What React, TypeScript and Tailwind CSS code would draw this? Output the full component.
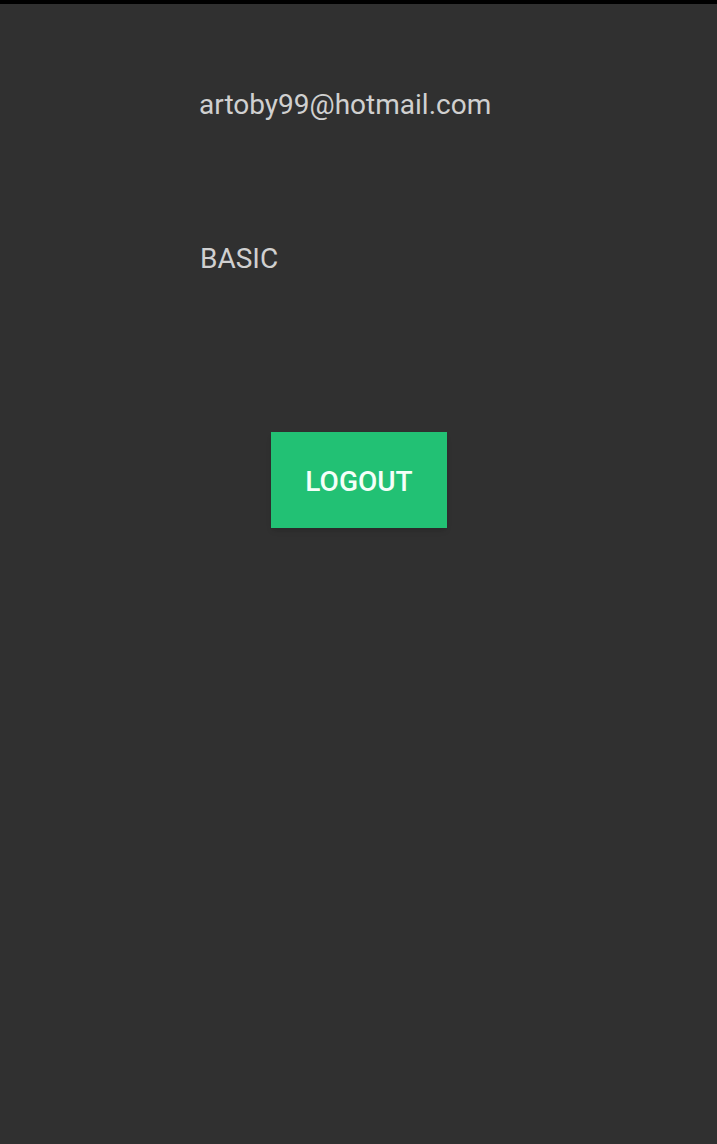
export default function App() {
  return (
    <div className="min-h-[1144px] w-full bg-[#303030]" style={{ fontFamily: "Roboto, sans-serif" }}>
      <div className="h-1 w-full bg-black"></div>
      <div className="flex flex-col pt-[85px]">
        <p className="pl-[199px] text-[28px] leading-[32px] text-[#d0d0d0]">artoby99@hotmail.com</p>
        <p className="mt-[122px] pl-[200px] text-[28px] leading-[32px] text-[#d0d0d0]">BASIC</p>
        <div className="mt-[157px] flex justify-center">
          <button className="ml-[1px] h-[96px] w-[176px] bg-[#22c174] pt-[3px] text-[28px] font-medium text-[#f4fff8] shadow-md">
            LOGOUT
          </button>
        </div>
      </div>
    </div>
  );
}
